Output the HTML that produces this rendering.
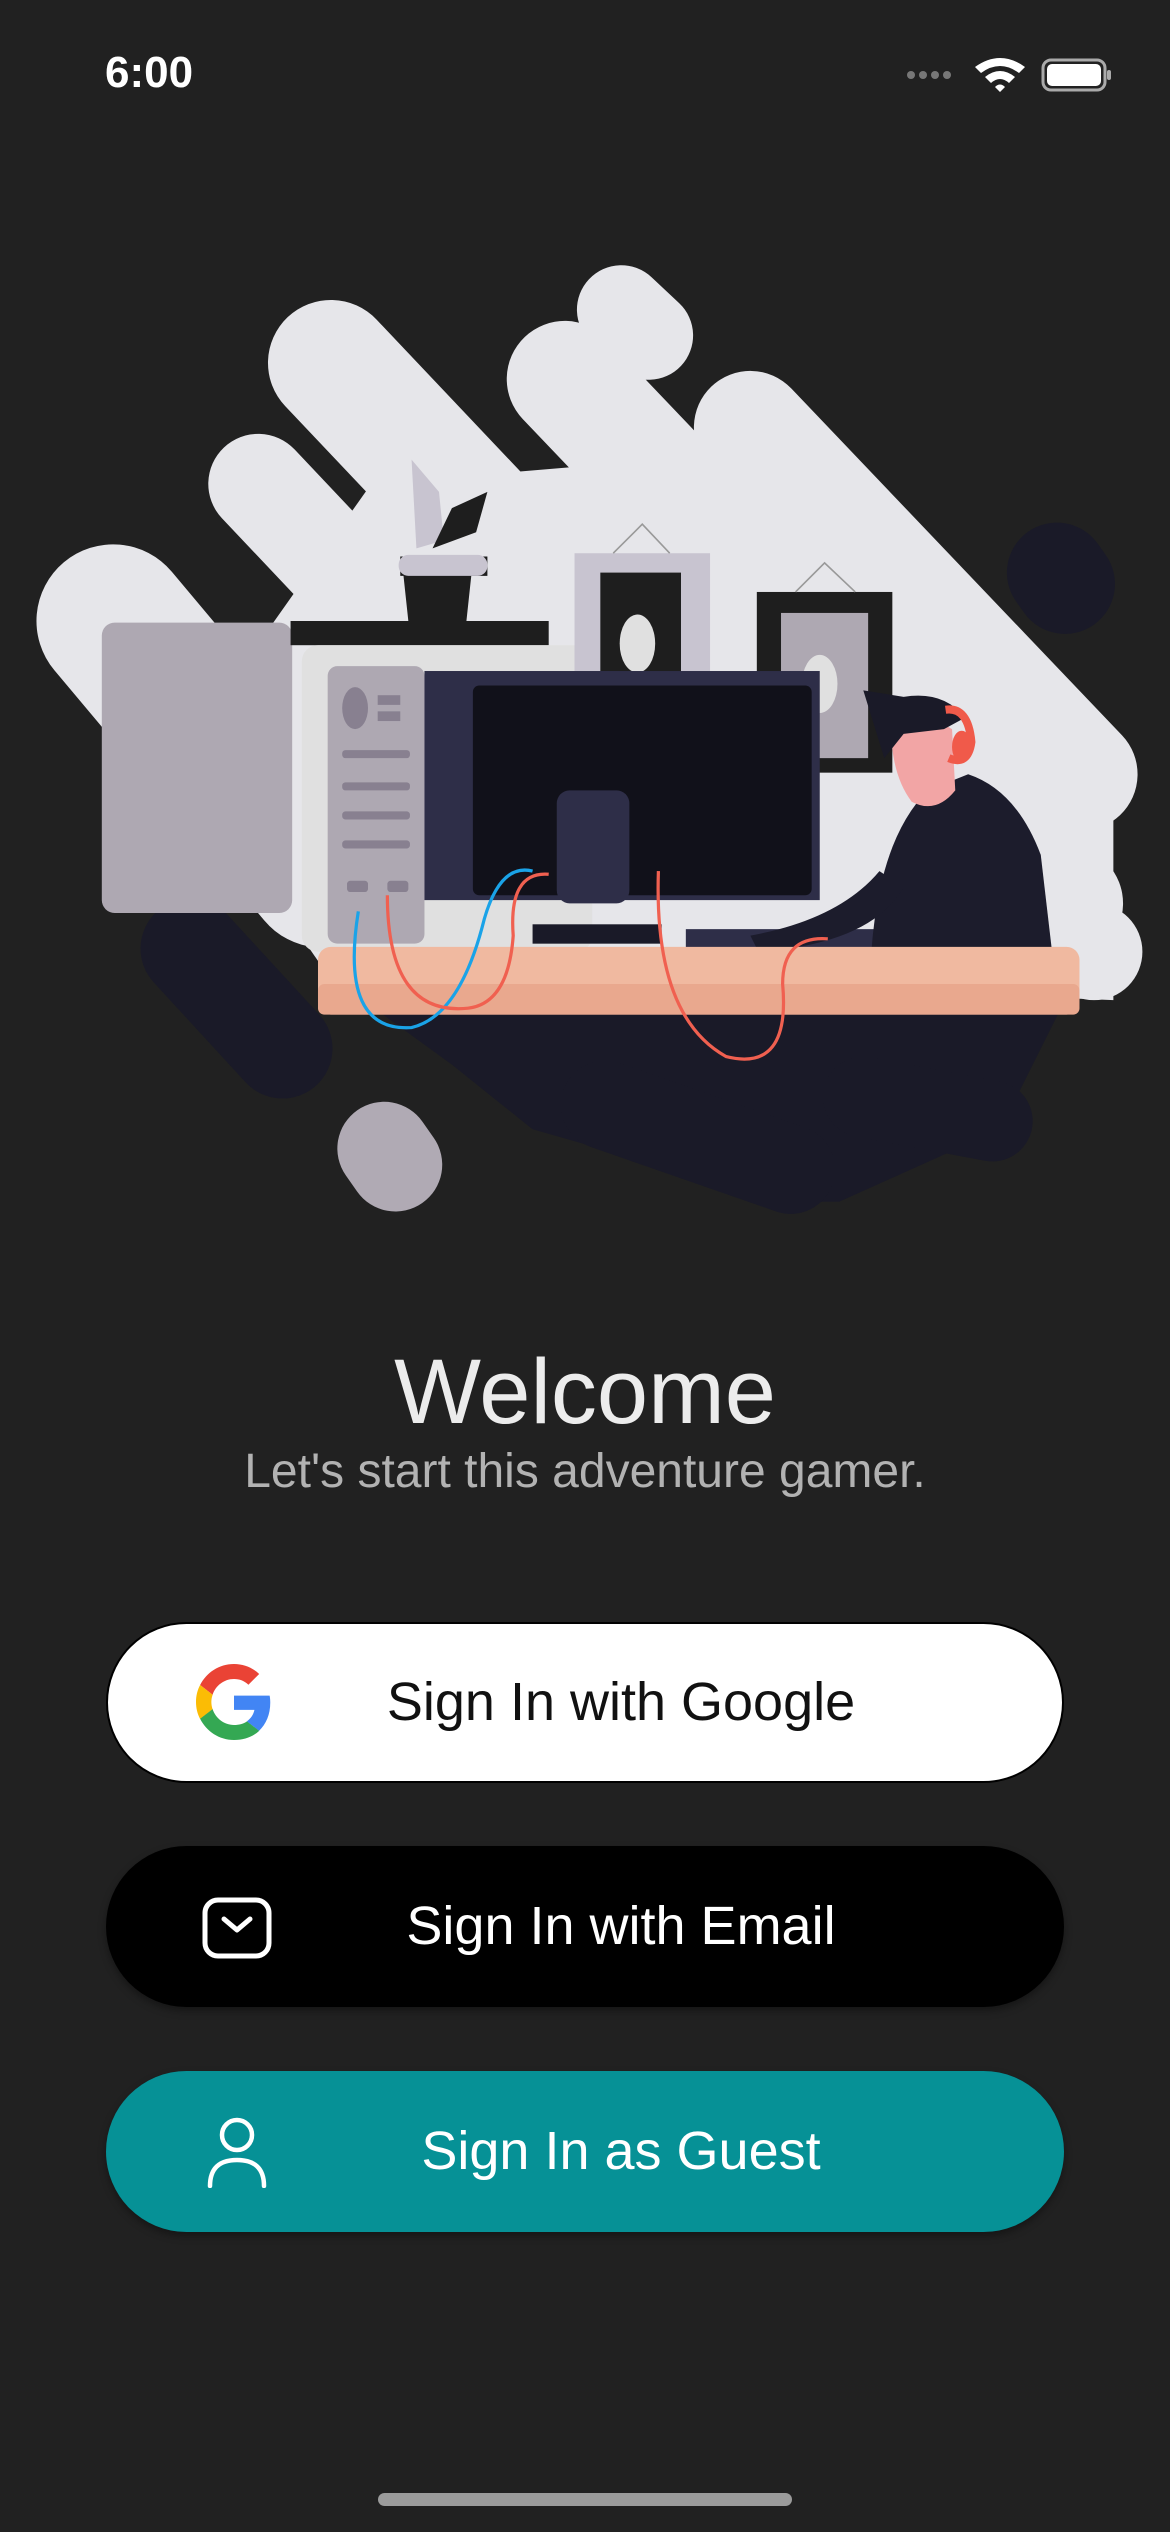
<!DOCTYPE html>
<html><head><meta charset="utf-8">
<style>
html,body{margin:0;padding:0;background:#212121;}
body{width:1170px;height:2532px;position:relative;overflow:hidden;font-family:"Liberation Sans",sans-serif;}
.abs{position:absolute;}
.btn{position:absolute;left:106px;width:958px;height:161px;border-radius:81px;box-sizing:border-box;}
.bt{position:absolute;left:0;width:1242px;text-align:center;font-size:54px;line-height:161px;top:0;}
</style></head><body>
<div class="abs" style="left:105px;top:48px;font-size:44px;font-weight:bold;color:#fff;">6:00</div>
<svg class="abs" style="left:905px;top:55px" width="210" height="40" viewBox="0 0 210 40">
 <g fill="#777"><circle cx="6" cy="20" r="4"/><circle cx="18" cy="20" r="4"/><circle cx="30" cy="20" r="4"/><circle cx="42" cy="20" r="4"/></g>
 <path d="M70 12 Q95 -6 120 12 L114 18 Q95 4 76 18Z M80 22 Q95 10 110 22 L104 28 Q95 20 86 28Z M90 32 L95 37 L100 32 Q95 27 90 32Z" fill="#fff"/>
 <rect x="138" y="5" width="62" height="30" rx="8" fill="none" stroke="#aaa" stroke-width="3"/>
 <rect x="142" y="9" width="54" height="22" rx="5" fill="#fff"/>
 <rect x="202" y="15" width="4" height="10" rx="2" fill="#aaa"/>
</svg>

<svg class="abs" style="left:0;top:258px" width="1170" height="968" viewBox="0 160 725 600">
 <g stroke="#e6e6ea" stroke-linecap="round" fill="none">
  <line x1="385" y1="192" x2="402" y2="208" stroke-width="55"/>
  <line x1="205" y1="225" x2="560" y2="600" stroke-width="78"/>
  <line x1="350" y1="235" x2="660" y2="560" stroke-width="72"/>
  <line x1="465" y1="265" x2="670" y2="480" stroke-width="70"/>
  <line x1="160" y1="300" x2="330" y2="480" stroke-width="62"/>
  <line x1="70" y1="385" x2="200" y2="540" stroke-width="95"/>
 </g>
 <polygon points="230,300 470,280 690,500 690,620 200,600 110,470" fill="#e6e6ea"/>
 <circle cx="676" cy="482" r="28" fill="#e6e6ea"/>
 <circle cx="678" cy="590" r="30" fill="#e6e6ea"/>
 <line x1="655" y1="355" x2="660" y2="362" stroke="#1a1a28" stroke-width="62" stroke-linecap="round"/>
 <line x1="118" y1="588" x2="175" y2="650" stroke="#1a1a28" stroke-width="62" stroke-linecap="round"/>
 <line x1="238" y1="712" x2="245" y2="722" stroke="#b0aab4" stroke-width="58" stroke-linecap="round"/>
 <polygon points="225,620 660,620 620,700 520,745 470,745 400,720 330,700 280,660" fill="#1a1a28"/>
 <g stroke="#1a1a28" stroke-linecap="round"><line x1="375" y1="685" x2="490" y2="725" stroke-width="55"/><line x1="535" y1="680" x2="615" y2="695" stroke-width="50"/></g>
 <rect x="63" y="386" width="118" height="180" rx="8" fill="#aea8b2"/>
 <rect x="180" y="385" width="160" height="15" fill="#1e1e1e"/>
 <rect x="187" y="400" width="180" height="190" rx="10" fill="#e0e0e0"/>
 <rect x="203" y="413" width="60" height="172" rx="6" fill="#aea8b2"/>
 <ellipse cx="220" cy="439" rx="8" ry="13" fill="#888090"/>
 <g fill="#888090"><rect x="234" y="431" width="14" height="6"/><rect x="234" y="441" width="14" height="6"/><rect x="212" y="465" width="42" height="5" rx="2"/><rect x="212" y="485" width="42" height="5" rx="2"/><rect x="212" y="503" width="42" height="5" rx="2"/><rect x="212" y="521" width="42" height="5" rx="2"/><rect x="215" y="546" width="13" height="7" rx="2"/><rect x="240" y="546" width="13" height="7" rx="2"/></g>
 <rect x="356" y="343" width="84" height="80" fill="#c8c4d0"/>
 <rect x="372" y="355" width="50" height="70" fill="#1e1e1e"/>
 <ellipse cx="395" cy="399" rx="11" ry="18" fill="#e0e0e0"/>
 <path d="M380 343 L398 325 L415 343" stroke="#999" fill="none"/>
 <rect x="469" y="367" width="84" height="112" fill="#1e1e1e"/>
 <rect x="484" y="380" width="54" height="90" fill="#aea8b2"/>
 <ellipse cx="508" cy="424" rx="11" ry="18" fill="#e0e0e0"/>
 <path d="M493 367 L511 349 L530 367" stroke="#999" fill="none"/>
 <rect x="263" y="416" width="245" height="142" fill="#2e2e48"/>
 <rect x="293" y="425" width="210" height="130" rx="4" fill="#11111a"/>
 <rect x="345" y="490" width="45" height="70" rx="8" fill="#2e2e48"/>
 <rect x="330" y="573" width="80" height="12" fill="#1a1a28"/>
 <rect x="425" y="576" width="150" height="12" fill="#2e2e48"/>
 <path d="M248 345 h54 v12 h-10 l-3 28 h-36 l-3 -28 h-2z" fill="#1e1e1e"/>
 <rect x="247" y="344" width="55" height="13" rx="6" fill="#c8c4d0"/>
 <path d="M258 340 L255 285 L272 305 L275 335Z" fill="#c8c4d0"/>
 <path d="M268 340 L280 315 L302 305 L295 330Z" fill="#1e1e1e"/>
 <path d="M540 590 Q545 520 575 490 L600 480 Q630 490 645 530 L652 590Z" fill="#1c1c2c"/>
 <path d="M465 580 Q520 570 545 540 L560 550 Q540 585 470 590Z" fill="#1c1c2c"/>
 <path d="M552 448 Q570 440 590 452 L592 490 Q580 505 565 497 Q552 480 552 448Z" fill="#f2a5a5"/>
 <path d="M535 428 L560 432 Q585 428 598 445 L585 452 L560 455 L548 470 Z" fill="#1a1a28"/>
 <path d="M586 440 Q600 438 602 460 Q600 475 588 470" stroke="#f05a4a" stroke-width="5" fill="none"/>
 <ellipse cx="596" cy="463" rx="6" ry="10" fill="#f05a4a"/>
 <rect x="197" y="587" width="472" height="42" rx="8" fill="#f0b9a0"/>
 <rect x="197" y="610" width="472" height="19" rx="4" fill="#e9a88e"/>
 <path d="M222 565 Q210 640 255 637 Q285 630 300 570 Q310 535 330 540" stroke="#1aa3e8" stroke-width="2" fill="none"/>
 <path d="M240 555 Q240 630 290 625 Q315 622 318 580 Q315 540 340 542" stroke="#f06050" stroke-width="2" fill="none"/>
 <path d="M408 540 Q405 630 450 655 Q490 665 485 610 Q485 580 513 582" stroke="#f06050" stroke-width="2" fill="none"/>
</svg>

<div class="abs" style="left:0;width:1170px;top:1337px;text-align:center;font-size:92px;color:#ececec;line-height:110px;">Welcome</div>
<div class="abs" style="left:0;width:1170px;top:1444px;text-align:center;font-size:48px;color:#b2b2b2;line-height:56px;">Let's start this adventure gamer.</div>

<div class="btn" style="top:1622px;background:#fff;border:2px solid #000;">
 <div class="bt" style="color:#111;left:-108px;line-height:157px">Sign In with Google</div>
 <svg class="abs" style="left:88px;top:40px" width="76" height="76" viewBox="0 0 48 48">
  <path fill="#EA4335" d="M24 9.5c3.5 0 6.6 1.2 9.1 3.6l6.8-6.8C35.8 2.4 30.3 0 24 0 14.6 0 6.6 5.4 2.6 13.3l7.9 6.1C12.4 13.700 17.7 9.5 24 9.5z"/>
  <path fill="#4285F4" d="M46.9 24.5c0-1.6-.1-3.1-.4-4.5H24v9h12.9c-.6 3-2.3 5.5-4.8 7.2l7.7 6c4.5-4.2 7.1-10.4 7.1-17.7z"/>
  <path fill="#FBBC05" d="M10.5 28.6c-.5-1.4-.8-3-.8-4.6s.3-3.2.8-4.6l-7.9-6.1C.9 16.5 0 20.1 0 24s.9 7.5 2.6 10.7l7.9-6.1z"/>
  <path fill="#34A853" d="M24 48c6.5 0 11.9-2.1 15.9-5.800l-7.7-6c-2.2 1.5-5 2.3-8.2 2.3-6.3 0-11.6-4.2-13.5-10l-7.9 6.1C6.6 42.6 14.6 48 24 48z"/>
 </svg>
</div>
<div class="btn" style="top:1846px;background:#000;box-shadow:0 4px 8px rgba(0,0,0,.35);">
 <div class="bt" style="color:#fff;left:-106px">Sign In with Email</div>
 <svg class="abs" style="left:96px;top:51px" width="70" height="62" viewBox="0 0 70 62"><rect x="3" y="3" width="64" height="56" rx="13" fill="none" stroke="#fff" stroke-width="5"/><path d="M22 22 L35 33 L48 22" fill="none" stroke="#fff" stroke-width="5" stroke-linecap="round" stroke-linejoin="round"/></svg>
</div>
<div class="btn" style="top:2071px;background:#069196;box-shadow:0 4px 8px rgba(0,0,0,.35);">
 <div class="bt" style="color:#fff;left:-106px">Sign In as Guest</div>
 <svg class="abs" style="left:100px;top:45px" width="62" height="72" viewBox="0 0 62 72"><circle cx="31" cy="19" r="15" fill="none" stroke="#fff" stroke-width="4.5"/><path d="M4 70 Q4 44 31 44 Q58 44 58 70" fill="none" stroke="#fff" stroke-width="4.5" stroke-linecap="round"/></svg>
</div>

<div class="abs" style="left:378px;top:2493px;width:414px;height:13px;border-radius:7px;background:#9b9b9b;"></div>
</body></html>
